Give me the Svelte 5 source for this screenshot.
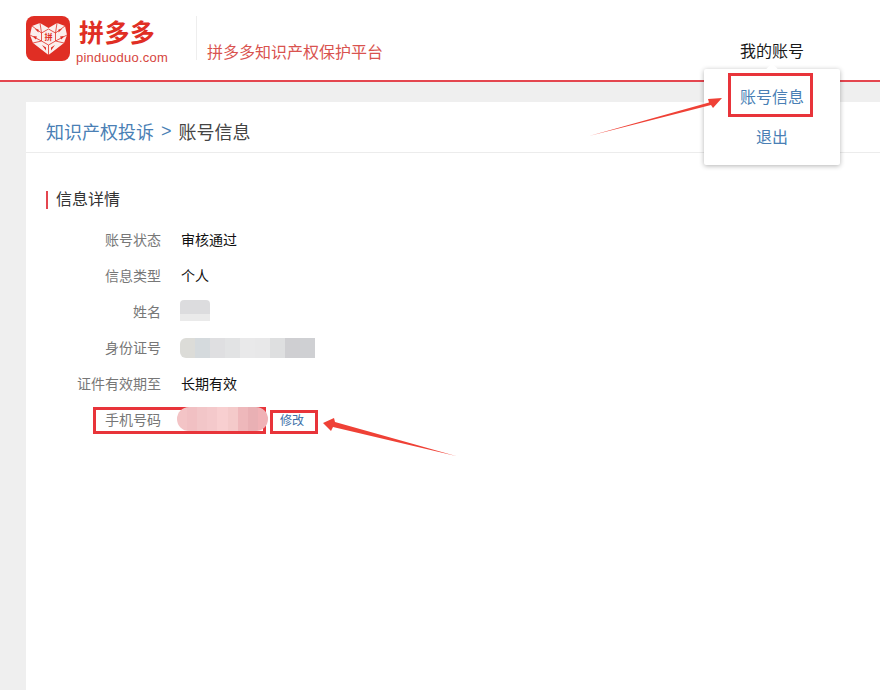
<script>
	const rows = [
		{ label: '账号状态', value: '审核通过' },
		{ label: '信息类型', value: '个人' },
		{ label: '姓名', blur: 'name' },
		{ label: '身份证号', blur: 'id' },
		{ label: '证件有效期至', value: '长期有效' }
	];
	const idCells = ['#dcdcd8', '#d5dadd', '#dfdfe1', '#e2e3e4', '#e9e9ea', '#e8e8e9', '#dedfe0', '#cfcfd2', '#cfd0d3'];
	const phoneCells = ['#f3c4c6', '#f1c0c3', '#f2c6c8', '#f4c9cb', '#f8cfd0', '#f4caca', '#eeb8bb', '#e9b0b4', '#f0b2b6'];
</script>

<div class="page">
	<header>
		<div class="logo">
			<svg class="mark" viewBox="0 0 44 45" width="44" height="45">
				<rect width="44" height="45" rx="8" fill="#e02e24" />
				<path d="M22.5 12 L14 7 L6 10 L4 19 L7 27 L22.5 39 L38 27 L41 19 L39 10 L31 7 Z" fill="#fbeeec" />
				<g stroke="#e02e24" stroke-width="0.8" fill="none">
					<path d="M22.5 13 L15.5 17 L15.5 25 L22.5 29 L29.5 25 L29.5 17 Z" />
					<path d="M15.5 17 L6 10 M29.5 17 L39 10 M15.5 25 L7 27 M29.5 25 L38 27 M22.5 29 L22.5 39 M15.5 17 L14 7 M29.5 17 L31 7 M15.5 25 L4 19 M29.5 25 L41 19" />
				</g>
				<g fill="#e02e24">
					<path d="M9 13 l3.5 .5 l0 3 Z M36 13 l-3.500 .5 l0 3 Z M7 20 l4 .5 l-1.500 3 Z M38 20 l-4 .5 l1.500 3 Z M16 29 l4 2.500 l0 3 Z M29 29 l-4 2.500 l0 3 Z" />
				</g>
				<text x="22.5" y="24" text-anchor="middle" class="mark-glyph">拼</text>
			</svg>
			<div class="brand">
				<div class="brand-name">拼多多</div>
				<div class="brand-url">pinduoduo.com</div>
			</div>
		</div>
		<div class="platform">拼多多知识产权保护平台</div>
		<div class="account">我的账号</div>
	</header>

	<main>
		<div class="crumbs">
			<span class="crumb-link">知识产权投诉</span>
			<span class="crumb-sep">&gt;</span>
			<span class="crumb-now">账号信息</span>
		</div>
		<section>
			<h2>信息详情</h2>
			{#each rows as row}
				<div class="row">
					<div class="label">{row.label}</div>
					{#if row.blur === 'name'}
						<div class="blur-name"></div>
					{:else if row.blur === 'id'}
						<div class="blur-id">
							{#each idCells as c}
								<span style="background:{c}"></span>
							{/each}
						</div>
					{:else}
						<div class="value">{row.value}</div>
					{/if}
				</div>
			{/each}
			<div class="row">
				<div class="label">手机号码</div>
				<div class="blur-phone">
					{#each phoneCells as c}
						<span style="background:{c}"></span>
					{/each}
				</div>
				<a class="edit" href="#edit">修改</a>
			</div>
		</section>
	</main>

	<div class="menu">
		<div class="menu-item">账号信息</div>
		<div class="menu-item">退出</div>
	</div>

	<div class="mark-box box-menu"></div>
	<div class="mark-box box-phone"></div>
	<div class="mark-box box-edit"></div>

	<svg class="arrows" width="880" height="690" viewBox="0 0 880 690">
		<path d="M589 136 L709 102.500 L708 99 L722 98 L713 108 L711 105 Z" fill="#ef4136" />
		<path d="M456 456 L333 427 L331 431 L323 423 L334 418 L335 422 Z" fill="#ef4136" />
	</svg>
</div>

<style>
	:global(body) {
		margin: 0;
		background: #efefef;
		font-family: "Liberation Sans", "Noto Sans CJK SC", sans-serif;
	}

	.page {
		position: relative;
		height: 690px;
		overflow: hidden;
		background: #efefef;
	}

	header {
		display: flex;
		height: 80px;
		background: #fff;
		border-bottom: 2px solid #e4464f;
	}

	.logo {
		display: flex;
		width: 170px;
		margin-left: 26px;
		padding-top: 16px;
		box-sizing: border-box;
	}

	.mark {
		flex: none;
		display: block;
	}

	.mark-glyph {
		font-size: 8px;
		font-weight: 700;
		fill: #e02e24;
	}

	.brand {
		margin-left: 6px;
	}

	.brand-name {
		margin: 2px 0 0 3px;
		font-size: 25px;
		line-height: 30px;
		font-weight: 700;
		letter-spacing: 0.4px;
		color: #e02e24;
	}

	.brand-url {
		margin-top: 2px;
		font-size: 13px;
		line-height: 16px;
		letter-spacing: 0.25px;
		color: #d6453d;
		white-space: nowrap;
	}

	.platform {
		height: 44px;
		margin-top: 16px;
		padding: 19px 0 0 10px;
		box-sizing: border-box;
		border-left: 1px solid #eee;
		font-size: 16px;
		line-height: 36px;
		color: #d9534f;
		white-space: nowrap;
	}

	.account {
		margin: 41px 0 0 357px;
		font-size: 16px;
		line-height: 22px;
		color: #1a1a1a;
		white-space: nowrap;
	}

	main {
		height: 588px;
		margin: 20px 0 0 26px;
		background: #fff;
	}

	.crumbs {
		display: flex;
		align-items: center;
		gap: 7px;
		height: 51px;
		padding: 8px 0 0 20px;
		box-sizing: border-box;
		border-bottom: 1px solid #ececec;
		font-size: 18px;
	}

	.crumb-link,
	.crumb-sep {
		color: #4a7fb5;
	}

	.crumb-now {
		color: #444;
	}

	section {
		padding: 38px 0 0 20px;
	}

	h2 {
		margin: 0 0 12px;
		padding-left: 8px;
		border-left: 2px solid #e4464f;
		font-size: 16px;
		line-height: 18px;
		font-weight: 400;
		color: #333;
	}

	.row {
		display: flex;
		align-items: center;
		height: 36px;
	}

	.label {
		width: 115px;
		text-align: right;
		font-size: 14px;
		color: #777;
		white-space: nowrap;
	}

	.value {
		margin-left: 20px;
		font-size: 14px;
		color: #111;
	}

	.blur-name {
		width: 30px;
		height: 21px;
		margin: 0 0 2px 19px;
		border-radius: 4px 4px 0 0;
		background: linear-gradient(#dcdcde 0 14px, #eaeaea 14px);
	}

	.blur-id {
		display: flex;
		width: 135px;
		height: 20px;
		margin: 2px 0 0 19px;
		border-radius: 6px 0 0 6px;
		overflow: hidden;
	}

	.blur-id span,
	.blur-phone span {
		flex: 1;
	}

	.blur-phone {
		position: relative;
		z-index: 1;
		display: flex;
		width: 91px;
		height: 24px;
		margin-left: 16px;
		border-radius: 12px;
		overflow: hidden;
	}

	.edit {
		margin-left: 12px;
		font-size: 12px;
		color: #3b6fa8;
		text-decoration: none;
	}

	.menu {
		position: absolute;
		left: 704px;
		top: 69px;
		width: 136px;
		height: 96px;
		padding-top: 12px;
		box-sizing: border-box;
		background: #fff;
		border-radius: 2px;
		box-shadow: 0 1px 5px rgba(0, 0, 0, 0.3);
	}

	.menu::before {
		content: '';
		position: absolute;
		left: 64px;
		top: -4px;
		width: 8px;
		height: 8px;
		background: #fff;
		transform: rotate(45deg);
	}

	.menu-item {
		height: 40px;
		line-height: 34px;
		text-align: center;
		font-size: 16px;
		color: #4a7fb5;
	}

	.mark-box {
		position: absolute;
		box-sizing: border-box;
		border: 3px solid #e8343a;
	}

	.box-menu {
		left: 728px;
		top: 73px;
		width: 85px;
		height: 44px;
	}

	.box-phone {
		left: 93px;
		top: 407px;
		width: 173px;
		height: 27px;
	}

	.box-edit {
		left: 270px;
		top: 410px;
		width: 48px;
		height: 24px;
	}

	.arrows {
		position: absolute;
		left: 0;
		top: 0;
		pointer-events: none;
	}
</style>
